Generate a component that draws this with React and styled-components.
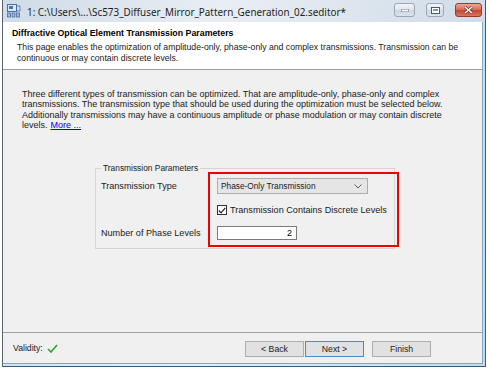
import React from "react";
import styled, { createGlobalStyle } from "styled-components";

const Global = createGlobalStyle`
  html, body { margin: 0; padding: 0; background: #ffffff; }
  body { font-family: "Liberation Sans", Arial, sans-serif; }
`;

const Window = styled.div`
  margin-left: 2px;
  width: 484px;
  height: 367px;
  box-sizing: border-box;
  display: flex;
  flex-direction: column;
  border-left: 1px solid #5b6470;
  border-right: 1px solid #3d5a70;
  border-bottom: 1px solid #3d5a70;
  background: linear-gradient(100deg, #cfdbe7 0%, #e9eef4 40%, #dfe7ef 60%, #cbd8e5 100%);
`;

const TitleBar = styled.div`
  height: 22px;
  flex: none;
  display: flex;
  align-items: center;
  padding-left: 4px;
  gap: 6px;
`;

const AppIcon = styled.svg`
  width: 14px;
  height: 14px;
  flex: none;
`;

const TitleText = styled.div`
  font-family: "Noto Sans", "Open Sans", sans-serif;
  font-size: 9.9px;
  color: #1e1e1e;
  white-space: nowrap;
  flex: 1;
  padding-top: 1px;
`;

const CaptionButtons = styled.div`
  display: flex;
  align-items: center;
  gap: 11px;
  padding-right: 3px;
  align-self: flex-start;
  padding-top: 3px;
`;

const CapBtn = styled.div`
  width: ${(p) => p.$w}px;
  height: 14px;
  box-sizing: border-box;
  border: 1px solid ${(p) => (p.$close ? "#9a3a2c" : "#9aa8b6")};
  border-radius: 3px;
  background: ${(p) =>
    p.$close
      ? "linear-gradient(#eaa898 0%, #d8705c 45%, #c8462e 55%, #d47a62 100%)"
      : "linear-gradient(#f2f5f8 0%, #dfe6ed 45%, #cfd9e3 55%, #dae3ec 100%)"};
  display: flex;
  align-items: center;
  justify-content: center;
`;

const Frame = styled.div`
  flex: 1;
  display: flex;
  flex-direction: column;
  margin-right: 2px;
  margin-bottom: 2px;
  border-right: 1px solid #7fa8c4;
  border-bottom: 1px solid #7fa8c4;
  min-height: 0;
`;

const Header = styled.div`
  height: 48px;
  flex: none;
  box-sizing: border-box;
  background: #ffffff;
  border-bottom: 1px solid #a0a0a0;
  padding: 6px 0 0 9px;
`;

const HeaderTitle = styled.div`
  font-weight: bold;
  font-size: 8.8px;
  color: #000;
  line-height: 11px;
`;

const HeaderDesc = styled.div`
  font-size: 8.7px;
  color: #1a1a1a;
  line-height: 11px;
  margin: 3px 0 0 5px;
  width: 470px;
`;

const Body = styled.div`
  flex: 1;
  background: #f0f0f0;
  display: flex;
  flex-direction: column;
  padding: 19px 0 0 19px;
  box-sizing: border-box;
  border-bottom: 1px solid #a0a0a0;
`;

const BodyText = styled.div`
  font-size: 9px;
  line-height: 10.3px;
  color: #1a1a1a;
  width: 440px;
`;

const MoreLink = styled.a`
  display: inline-block;
  margin-left: 3px;
  color: #0000ee;
  text-decoration: underline;
`;

const GroupBox = styled.fieldset`
  margin: 34px 0 0 73px;
  width: 300px;
  height: 85px;
  box-sizing: border-box;
  border: 1px solid #d5d5d5;
  border-radius: 0;
  padding: 0;
  position: relative;
`;

const Legend = styled.legend`
  font-size: 8.4px;
  color: #1a1a1a;
  padding: 0 2px;
  margin-left: 5px;
  line-height: 9px;
`;

const GroupGrid = styled.div`
  display: grid;
  grid-template-columns: 116px 1fr;
  grid-template-rows: 16px 14px 14px;
  row-gap: 9px;
  align-items: center;
  padding: 5px 0 0 5px;
`;

const Label = styled.div`
  font-size: 9.1px;
  color: #1a1a1a;
`;

const Select = styled.div`
  width: 151px;
  height: 16px;
  box-sizing: border-box;
  border: 1px solid #adadad;
  background: #e5e5e5;
  display: flex;
  align-items: center;
  justify-content: space-between;
  padding: 0 5px 0 3px;
  font-size: 8.3px;
  color: #1a1a1a;
`;

const CheckRow = styled.label`
  display: flex;
  align-items: center;
  gap: 3px;
  font-size: 9.1px;
  color: #1a1a1a;
`;

const CheckBox = styled.span`
  width: 10px;
  height: 10px;
  box-sizing: border-box;
  border: 1px solid #333;
  background: #fff;
  display: flex;
  align-items: center;
  justify-content: center;
`;

const NumberInput = styled.div`
  width: 80px;
  height: 14px;
  box-sizing: border-box;
  border: 1px solid #7a7a7a;
  background: #fff;
  font-size: 9px;
  color: #000;
  text-align: right;
  padding-right: 4px;
  line-height: 12px;
`;

const Highlight = styled.div`
  position: absolute;
  left: 112px;
  top: -1px;
  width: 191px;
  height: 75px;
  border: 2.5px solid #ee0000;
  box-sizing: border-box;
  pointer-events: none;
`;

const Footer = styled.div`
  height: 30px;
  flex: none;
  background: #f0f0f0;
  display: flex;
  align-items: center;
  padding: 0 0 0 10px;
`;

const Validity = styled.div`
  display: flex;
  align-items: center;
  gap: 4px;
  font-size: 8.7px;
  color: #1a1a1a;
  flex: 1;
`;

const Buttons = styled.div`
  display: flex;
  gap: 1px;
  margin-right: 51px;
  padding-top: 1px;
`;

const Btn = styled.div`
  width: 59px;
  height: 16px;
  box-sizing: border-box;
  border: 1px solid ${(p) => (p.$default ? "#3c8fd9" : "#adadad")};
  background: #e1e1e1;
  font-size: 8.7px;
  color: #1a1a1a;
  display: flex;
  align-items: center;
  justify-content: center;
  margin-right: ${(p) => (p.$gapAfter ? 7 : 0)}px;
`;

export default function App() {
  return (
    <>
      <Global />
      <Window>
        <TitleBar>
          <AppIcon viewBox="0 0 14 14">
            <rect x="0.5" y="0.5" width="9" height="7" fill="#dbe8f7" stroke="#4a6fa5" />
            <rect x="2" y="2" width="4" height="3" fill="#3e78c4" />
            <rect x="0.5" y="9" width="3" height="4" fill="#9fb6d6" stroke="#4a6fa5" strokeWidth="0.8" />
            <rect x="5" y="9" width="3" height="4" fill="#9fb6d6" stroke="#4a6fa5" strokeWidth="0.8" />
            <rect x="9.5" y="9" width="3" height="4" fill="#9fb6d6" stroke="#4a6fa5" strokeWidth="0.8" />
            <path d="M10 2 h3 v5 h-3" fill="none" stroke="#4a6fa5" strokeWidth="0.8" />
          </AppIcon>
          <TitleText>1: C:\Users\...\Sc573_Diffuser_Mirror_Pattern_Generation_02.seditor*</TitleText>
          <CaptionButtons>
            <CapBtn $w={21}>
              <svg width="8" height="3" viewBox="0 0 8 3">
                <rect x="0" y="0" width="8" height="3" fill="#fff" stroke="#4a5868" strokeWidth="0.8" />
              </svg>
            </CapBtn>
            <CapBtn $w={18}>
              <svg width="9" height="7" viewBox="0 0 9 7">
                <rect x="0.5" y="0.5" width="8" height="6" fill="#fff" stroke="#4a5868" />
                <rect x="2" y="2" width="5" height="2" fill="#8b97a5" />
              </svg>
            </CapBtn>
            <CapBtn $w={27} $close>
              <svg width="9" height="8" viewBox="0 0 9 8">
                <path d="M1 1 L8 7 M8 1 L1 7" stroke="#5a2418" strokeWidth="2.6" />
                <path d="M1 1 L8 7 M8 1 L1 7" stroke="#ffffff" strokeWidth="1.6" />
              </svg>
            </CapBtn>
          </CaptionButtons>
        </TitleBar>
        <Frame>
          <Header>
            <HeaderTitle>Diffractive Optical Element Transmission Parameters</HeaderTitle>
            <HeaderDesc>
              This page enables the optimization of amplitude-only, phase-only and complex transmissions. Transmission can be
              continuous or may contain discrete levels.
            </HeaderDesc>
          </Header>
          <Body>
            <BodyText>
              Three different types of transmission can be optimized. That are amplitude-only, phase-only and complex
              transmissions. The transmission type that should be used during the optimization must be selected below.
              Additionally transmissions may have a continuous amplitude or phase modulation or may contain discrete
              levels.<MoreLink>More ...</MoreLink>
            </BodyText>
            <GroupBox>
              <Legend>Transmission Parameters</Legend>
              <GroupGrid>
                <Label>Transmission Type</Label>
                <Select>
                  <span>Phase-Only Transmission</span>
                  <svg width="8" height="5" viewBox="0 0 8 5">
                    <path d="M0.5 0.5 L4 4 L7.5 0.5" fill="none" stroke="#606060" strokeWidth="1" />
                  </svg>
                </Select>
                <span />
                <CheckRow>
                  <CheckBox>
                    <svg width="8" height="7" viewBox="0 0 8 7">
                      <path d="M0.8 3.5 L3 5.8 L7.3 0.8" fill="none" stroke="#222" strokeWidth="1.2" />
                    </svg>
                  </CheckBox>
                  Transmission Contains Discrete Levels
                </CheckRow>
                <Label>Number of Phase Levels</Label>
                <NumberInput>2</NumberInput>
              </GroupGrid>
              <Highlight />
            </GroupBox>
          </Body>
          <Footer>
            <Validity>
              Validity:
              <svg width="11" height="9" viewBox="0 0 11 9">
                <path d="M1 5 L4 8 L10 1" fill="none" stroke="#2aa52a" strokeWidth="1.6" />
              </svg>
            </Validity>
            <Buttons>
              <Btn>&lt; Back</Btn>
              <Btn $default $gapAfter>Next &gt;</Btn>
              <Btn>Finish</Btn>
            </Buttons>
          </Footer>
        </Frame>
      </Window>
    </>
  );
}
